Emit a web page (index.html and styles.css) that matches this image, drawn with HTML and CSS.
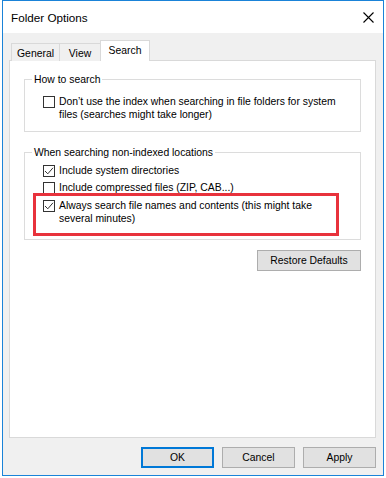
FILE: index.html
```html
<!DOCTYPE html>
<html>
<head>
<meta charset="utf-8">
<link rel="stylesheet" href="styles.css">
</head>
<body>
<div class="window">
  <div class="titlebar">
    <span class="title">Folder Options</span>
    <svg class="close" width="11" height="11" viewBox="0 0 11 11"><path d="M0.5 0.5 L10.5 10.5 M10.5 0.5 L0.5 10.5" stroke="#000" stroke-width="1.1" fill="none"/></svg>
  </div>
  <div class="client">
    <div class="tabs">
      <div class="tab tab-general">General</div>
      <div class="tab tab-view">View</div>
      <div class="tab tab-search active">Search</div>
    </div>
    <div class="panel">
      <fieldset class="group group-how">
        <legend>How to search</legend>
        <div class="check">
          <span class="box"></span>
          <span class="text">Don’t use the index when searching in file folders for system<br>files (searches might take longer)</span>
        </div>
      </fieldset>
      <fieldset class="group group-non">
        <legend>When searching non-indexed locations</legend>
        <div class="check">
          <span class="box checked"><svg viewBox="0 0 10 10" width="10" height="10"><path d="M1 5 L3.8 7.8 L9 1.8" stroke="#333" stroke-width="1" fill="none"/></svg></span>
          <span class="text">Include system directories</span>
        </div>
        <div class="check row2">
          <span class="box"></span>
          <span class="text">Include compressed files (ZIP, CAB...)</span>
        </div>
        <div class="check row3 highlighted">
          <span class="box checked"><svg viewBox="0 0 10 10" width="10" height="10"><path d="M1 5 L3.8 7.8 L9 1.8" stroke="#333" stroke-width="1" fill="none"/></svg></span>
          <span class="text">Always search file names and contents (this might take<br>several minutes)</span>
        </div>
      </fieldset>
      <div class="restore-row">
        <button class="btn btn-restore">Restore Defaults</button>
      </div>
    </div>
    <div class="footer">
      <button class="btn btn-default">OK</button>
      <button class="btn">Cancel</button>
      <button class="btn">Apply</button>
    </div>
  </div>
</div>
</body>
</html>
```

FILE: styles.css
```css
* {
  box-sizing: border-box;
}

body {
  margin: 0;
  background: #ffffff;
  font-family: "Liberation Sans", Arial, sans-serif;
  font-size: 10.4px;
  color: #000;
}

.window {
  margin-left: 2px;
  width: 382px;
  height: 476px;
  border: 1px solid #1a83d8;
  background: #f0f0f0;
  display: flex;
  flex-direction: column;
}

.titlebar {
  height: 32px;
  background: #ffffff;
  display: flex;
  align-items: center;
  justify-content: space-between;
  padding: 0 9px 0 8px;
  flex: none;
}

.title {
  font-size: 11.7px;
  margin-top: 1px;
}

.close {
  display: block;
  margin-top: 1px;
}

.client {
  flex: 1;
  display: flex;
  flex-direction: column;
  padding: 7px 7px 7px 6px;
}

.tabs {
  display: flex;
  align-items: flex-end;
  height: 21px;
  padding-left: 2px;
  margin-bottom: -1px;
  position: relative;
  z-index: 1;
  flex: none;
}

.tab {
  height: 18px;
  border: 1px solid #d9d9d9;
  border-bottom: none;
  background: #f0f0f0;
  display: flex;
  align-items: center;
  justify-content: center;
  line-height: 13px;
  padding-top: 1px;
}

.tab-general {
  width: 49px;
}

.tab-view {
  width: 42px;
  margin-left: -1px;
}

.tab-search {
  width: 50px;
  margin-left: -1px;
}

.tab.active {
  height: 21px;
  background: #ffffff;
  padding-top: 0;
  padding-bottom: 2px;
}

.panel {
  flex: 1;
  background: #ffffff;
  border: 1px solid #d9d9d9;
  display: flex;
  flex-direction: column;
  padding: 12px 14px 0 14px;
}

.group {
  margin: 0;
  border: 1px solid #dcdcdc;
  padding: 0 0 0 0;
  min-width: 0;
}

.group legend {
  margin-left: 7px;
  padding: 0 2px;
  line-height: 13px;
}

.group-how {
  padding-top: 9px;
  padding-bottom: 10px;
}

.group-non {
  margin-top: 14px;
  padding-top: 5px;
  padding-bottom: 14px;
}

.check {
  display: flex;
  align-items: flex-start;
  gap: 4px;
  margin-left: 18px;
  line-height: 13px;
  position: relative;
}

.row2 {
  margin-top: 4px;
}

.row3 {
  margin-top: 5px;
}

.box {
  width: 12px;
  height: 12px;
  border: 1px solid #333333;
  background: #ffffff;
  flex: none;
  margin-top: 1px;
  display: flex;
  align-items: center;
  justify-content: center;
}

.box svg {
  display: block;
}

.highlighted::after {
  content: "";
  position: absolute;
  left: -10px;
  top: -6px;
  width: 300px;
  height: 37px;
  border: 3px solid #e8323c;
  pointer-events: none;
}

.restore-row {
  display: flex;
  justify-content: flex-end;
  margin-top: 10px;
}

.btn {
  font-family: inherit;
  font-size: 10.4px;
  color: #000;
  background: #e1e1e1;
  border: 1px solid #adadad;
  height: 21px;
  width: 73px;
  padding: 0;
  line-height: 13px;
}

.btn-restore {
  width: 104px;
}

.btn-default {
  border: 2px solid #0078d7;
}

.footer {
  display: flex;
  justify-content: flex-end;
  gap: 8px;
  margin-top: 9px;
  flex: none;
}
```
